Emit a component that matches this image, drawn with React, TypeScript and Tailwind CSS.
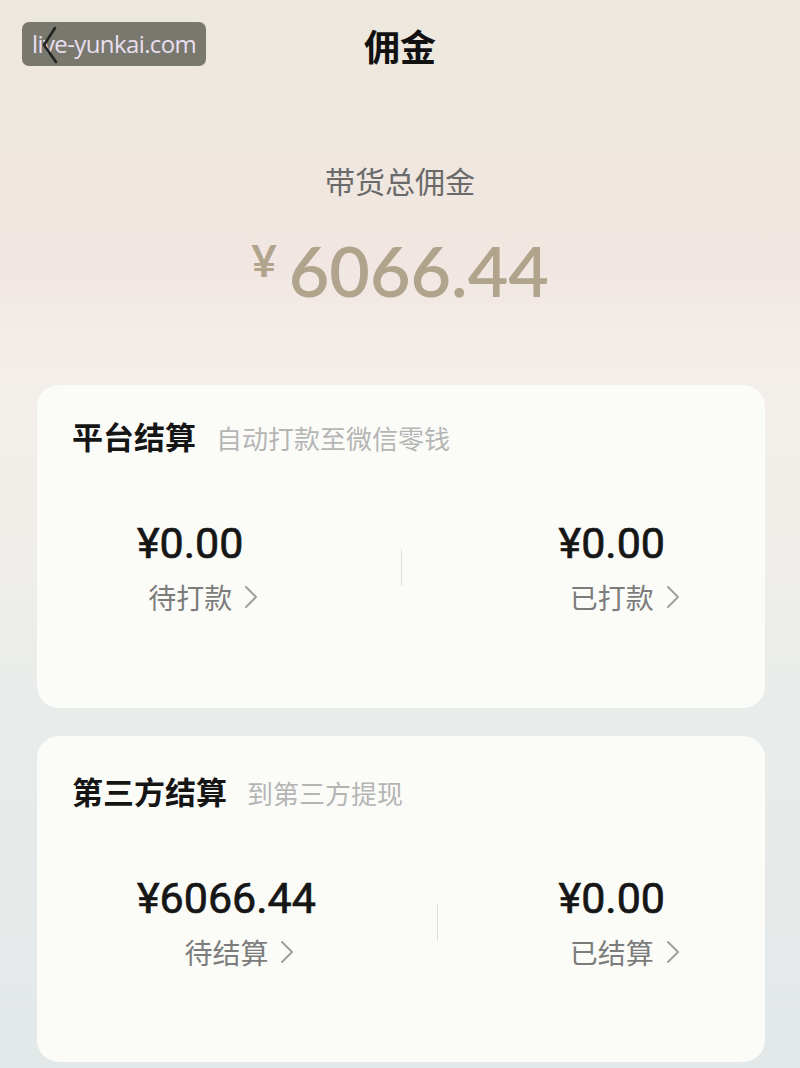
import React from 'react';

const cjk = "font-['Noto_Sans_CJK_SC',sans-serif]";

interface Stat {
  amount: string;
  label: string;
}

interface SettleCardProps {
  title: string;
  hint: string;
  left: Stat;
  right: Stat;
  spacing: string;
}

function Chevron() {
  return (
    <svg width="14" height="24" viewBox="0 0 14 24" className="ml-3 shrink-0">
      <polyline points="2,2 12,12 2,22" fill="none" stroke="#a0a0a0" strokeWidth="2" strokeLinecap="round" strokeLinejoin="round" />
    </svg>
  );
}

function StatColumn({ amount, label }: Stat) {
  return (
    <div className="flex flex-col items-center">
      <span className="text-[43px] leading-[44px] font-normal text-[#161616] font-['Roboto',sans-serif] [-webkit-text-stroke:0.7px_#161616]">{amount}</span>
      {/* chevron hangs past the text so the word stays centered under the amount */}
      <span className={`mt-4 flex items-center -mr-[26px] text-[28px] leading-8 text-[#7c7c7c] ${cjk}`}>
        {label}
        <Chevron />
      </span>
    </div>
  );
}

function SettleCard({ title, hint, left, right, spacing }: SettleCardProps) {
  return (
    <div className={`ml-[37px] mr-[35px] rounded-[22px] bg-[#fbfcf8] px-[35px] ${spacing}`}>
      <div className={`flex items-baseline gap-5 ${cjk}`}>
        <span className="text-[31px] leading-[30px] font-bold text-[#151515]">{title}</span>
        <span className="text-[26px] leading-[30px] text-[#b5b5b5]">{hint}</span>
      </div>
      <div className="mt-[68px] flex items-center justify-between px-[65px]">
        <StatColumn {...left} />
        <div className="w-px h-[37px] bg-[#e0e0e0]" />
        <StatColumn {...right} />
      </div>
    </div>
  );
}

export default function App() {
  return (
    <div className="w-full min-h-[1068px] pb-2 bg-[linear-gradient(180deg,#ede8de_0%,#efe8df_12%,#f1e6e1_24%,#f3eeea_34%,#f1eeea_50%,#e8ecea_66%,#e3e8e9_100%)]">
      {/* top bar */}
      <div className="relative h-[90px] flex items-center justify-center">
        <div className="absolute left-[22px] top-[22px] w-[184px] h-[44px] rounded-[7px] bg-[#6b6c62]/90 flex items-center pl-[10px]">
          <span className="text-[24px] leading-none text-[#eadff0] font-['Open_Sans',sans-serif] tracking-[-0.6px]">live-yunkai.com</span>
        </div>
        <svg width="20" height="40" viewBox="0 0 20 40" className="absolute left-[40px] top-[25px]">
          <polyline points="15,3 4,20 16,37" fill="none" stroke="#222222" strokeWidth="2.6" strokeLinecap="round" strokeLinejoin="round" />
        </svg>
        <h1 className={`text-[36px] leading-none font-bold text-[#111111] ${cjk}`}>佣金</h1>
      </div>

      {/* total */}
      <div className="flex flex-col items-center">
        <p className={`mt-[70px] text-[30px] leading-10 text-[#6a6a6a] ${cjk}`}>带货总佣金</p>
        <div className="mt-[30px] flex items-start text-[#b1a48c] font-['Lato',sans-serif]">
          <span className="mt-2 mr-3 text-[44px] leading-[44px] font-bold">¥</span>
          <span className="text-[70px] leading-[80px] font-semibold">6066.44</span>
        </div>
      </div>

      <div className="mt-[75px] flex flex-col gap-7">
        <SettleCard
          title="平台结算"
          hint="自动打款至微信零钱"
          left={{ amount: '¥0.00', label: '待打款' }}
          right={{ amount: '¥0.00', label: '已打款' }}
          spacing="pt-9 pb-[95px]"
        />
        <SettleCard
          title="第三方结算"
          hint="到第三方提现"
          left={{ amount: '¥6066.44', label: '待结算' }}
          right={{ amount: '¥0.00', label: '已结算' }}
          spacing="pt-10 pb-[94px]"
        />
      </div>
    </div>
  );
}
